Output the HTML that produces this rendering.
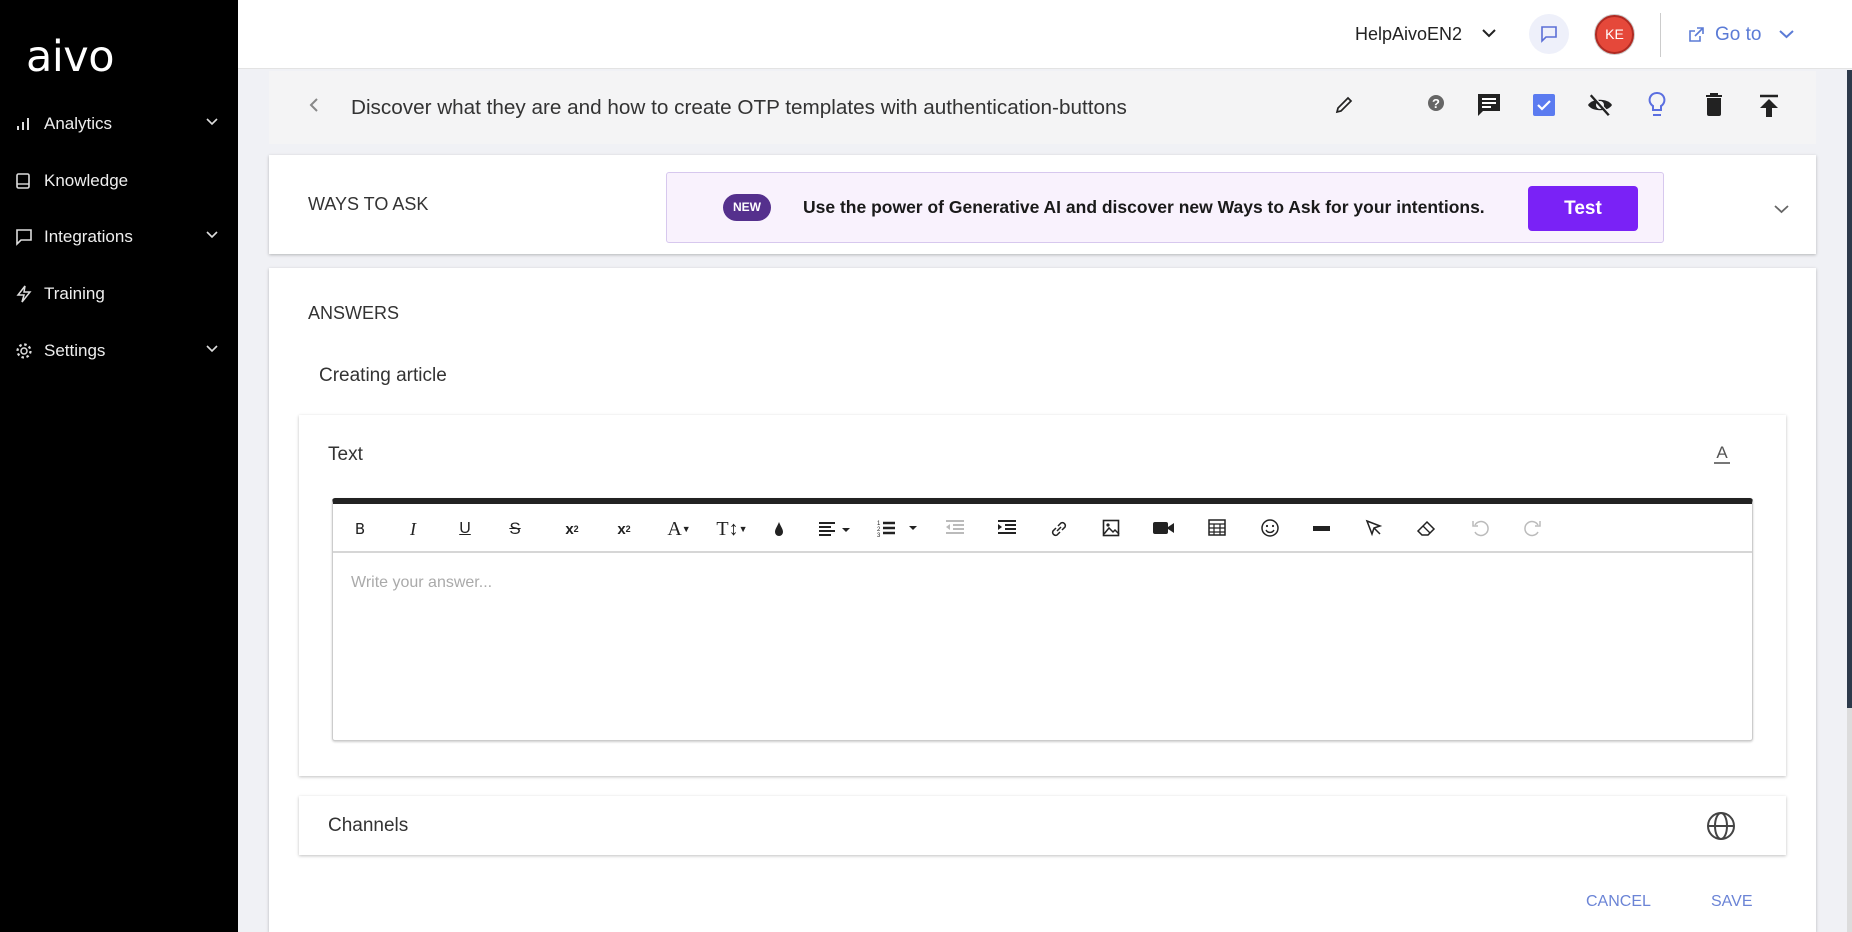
<!DOCTYPE html>
<html><head><meta charset="utf-8">
<style>
*{box-sizing:border-box;margin:0;padding:0}
html{width:1852px;height:932px;overflow:hidden}
body{width:1852px;height:932px;overflow:hidden;background:#f0f1f5;font-family:"Liberation Sans",sans-serif;color:#333;position:relative}
.abs{position:absolute}
#side{left:0;top:0;width:238px;height:932px;background:#000;color:#fff}
.nav{position:absolute;left:0;width:238px;height:30px;font-size:17px;color:#eee}
.nav svg{position:absolute;left:15px;top:5px}
.nav span{position:absolute;left:44px;top:4px}
.nav .chev{position:absolute;left:206px;top:8px}
#top{left:238px;top:0;width:1614px;height:69px;background:#fff;border-bottom:1px solid #e3e3e3}
.card{position:absolute;background:#fff;box-shadow:0 1px 3px rgba(0,0,0,.25)}
.tb{position:absolute;top:518px;width:22px;height:22px;display:flex;align-items:center;justify-content:center;font-size:16px;color:#222}
</style></head><body>
<div id="side" class="abs">
  <div class="abs" style="left:26px;top:32px;font-size:43px;letter-spacing:-0.5px;font-family:'DejaVu Sans',sans-serif;font-weight:500;line-height:50px">aivo</div>
  <div class="nav" style="top:110px"><svg width="16" height="18"><path d="M3 15v-4M8 15V7M13 15V3" stroke="#ddd" stroke-width="2"/></svg><span>Analytics</span><svg class="chev" width="12" height="8"><path d="M1 1l5 5 5-5" stroke="#ddd" stroke-width="1.6" fill="none"/></svg></div>
  <div class="nav" style="top:167px"><svg width="16" height="18"><rect x="2" y="2" width="12" height="14" rx="1.5" stroke="#ddd" stroke-width="1.6" fill="none"/><path d="M2 12h12" stroke="#ddd" stroke-width="1.4"/></svg><span>Knowledge</span></div>
  <div class="nav" style="top:223px"><svg width="18" height="18"><path d="M2 2h14v10H6l-4 4z" stroke="#ddd" stroke-width="1.6" fill="none"/></svg><span>Integrations</span><svg class="chev" width="12" height="8"><path d="M1 1l5 5 5-5" stroke="#ddd" stroke-width="1.6" fill="none"/></svg></div>
  <div class="nav" style="top:280px"><svg width="18" height="18"><path d="M10 1L3 10h6l-2 7 8-10h-6z" stroke="#ddd" stroke-width="1.5" fill="none"/></svg><span>Training</span></div>
  <div class="nav" style="top:337px"><svg width="18" height="18"><circle cx="9" cy="9" r="3" stroke="#ddd" stroke-width="1.5" fill="none"/><circle cx="9" cy="9" r="6.5" stroke="#ddd" stroke-width="2.2" fill="none" stroke-dasharray="2.5 2.6"/></svg><span>Settings</span><svg class="chev" width="12" height="8"><path d="M1 1l5 5 5-5" stroke="#ddd" stroke-width="1.6" fill="none"/></svg></div>
</div>
<div id="top" class="abs">
  <div class="abs" style="left:1117px;top:24px;font-size:18px;color:#222">HelpAivoEN2</div>
  <svg class="abs" style="left:1244px;top:29px" width="14" height="9"><path d="M1 1l6 6 6-6" stroke="#222" stroke-width="2" fill="none"/></svg>
  <div class="abs" style="left:1291px;top:14px;width:40px;height:40px;border-radius:50%;background:#eef0fa"></div>
  <svg class="abs" style="left:1302px;top:25px" width="18" height="18"><path d="M2 2h14v10H6l-4 4z" stroke="#5b6fd6" stroke-width="1.6" fill="none"/></svg>
  <div class="abs" style="left:1357px;top:15px;width:39px;height:39px;border-radius:50%;background:#e5483a;border:2px solid #b02a22;box-shadow:0 0 0 1px #ccc;color:#fff;font-size:14px;text-align:center;line-height:35px">KE</div>
  <div class="abs" style="left:1422px;top:13px;width:1px;height:44px;background:#ccc"></div>
  <svg class="abs" style="left:1449px;top:26px" width="18" height="18"><path d="M13 10v5H3V5h5M10 2h6v6M16 2L8 10" stroke="#5b7bd6" stroke-width="1.6" fill="none"/></svg>
  <div class="abs" style="left:1477px;top:24px;font-size:19px;color:#5b7bd6">Go to</div>
  <svg class="abs" style="left:1541px;top:30px" width="15" height="9"><path d="M1 1l6.5 6 6.5-6" stroke="#5b7bd6" stroke-width="2" fill="none"/></svg>
</div>
<div class="abs" style="left:1847px;top:70px;width:5px;height:638px;background:#2d3a4b"></div>
<div class="abs" style="left:1847px;top:708px;width:5px;height:224px;background:#dcdcdc"></div>

<div class="abs" style="left:269px;top:71px;width:1547px;height:73px;background:#f4f4f5"></div>
<svg class="abs" style="left:309px;top:97px" width="10" height="16"><path d="M8 2L2 8l6 6" stroke="#888" stroke-width="2" fill="none"/></svg>
<div class="abs" style="left:351px;top:96px;font-size:20.7px;color:#333">Discover what they are and how to create OTP templates with authentication-buttons</div>
<svg class="abs" style="left:1333px;top:94px" width="22" height="22"><path d="M4 18l1-4L15 4l3 3L8 17z" stroke="#222" stroke-width="1.7" fill="none"/></svg>
<svg class="abs" style="left:1427px;top:94px" width="18" height="18"><circle cx="9" cy="9" r="8" fill="#666"/><text x="9" y="14" font-size="13" font-weight="bold" text-anchor="middle" fill="#fff" font-family="Liberation Sans">?</text></svg>
<svg class="abs" style="left:1476px;top:92px" width="26" height="26"><path d="M2 2h22v17H7l-5 5z" fill="#222"/><path d="M6 7h14M6 11h14M6 15h9" stroke="#fff" stroke-width="2"/></svg>
<svg class="abs" style="left:1532px;top:93px" width="24" height="24"><rect x="1" y="1" width="22" height="22" rx="2" fill="#5b7bf0"/><path d="M6 12l4 4 8-8" stroke="#fff" stroke-width="2.2" fill="none"/></svg>
<svg class="abs" style="left:1586px;top:92px" width="28" height="26"><path d="M2 13c4-7 20-7 24 0-4 7-20 7-24 0z" fill="#222"/><circle cx="14" cy="13" r="4" fill="#f4f4f5"/><path d="M5 3l18 20" stroke="#222" stroke-width="3"/><path d="M6 2l18 20" stroke="#f4f4f5" stroke-width="1.2"/></svg>
<svg class="abs" style="left:1647px;top:91px" width="20" height="28"><path d="M10 2a7 7 0 0 0-4 13v4h8v-4a7 7 0 0 0-4-13z" stroke="#5b6fe0" stroke-width="2" fill="none"/><path d="M6 24h8" stroke="#5b6fe0" stroke-width="2"/></svg>
<svg class="abs" style="left:1704px;top:92px" width="20" height="26"><path d="M2 4h16M7 4V2h6v2" stroke="#222" stroke-width="2"/><path d="M3 6h14v16a2 2 0 0 1-2 2H5a2 2 0 0 1-2-2z" fill="#222"/></svg>
<svg class="abs" style="left:1759px;top:94px" width="20" height="24"><path d="M1 2h18" stroke="#222" stroke-width="2.5"/><path d="M10 5l-9 9h6v9h6v-9h6z" fill="#222"/></svg>

<div class="card" style="left:269px;top:155px;width:1547px;height:99px"></div>
<div class="abs" style="left:308px;top:194px;font-size:18px;color:#333">WAYS TO ASK</div>
<div class="abs" style="left:666px;top:172px;width:998px;height:71px;background:#f9f2fd;border:1px solid #d7c8ee;border-radius:3px"></div>
<div class="abs" style="left:723px;top:194px;width:48px;height:27px;border-radius:14px;background:#55308d;color:#fff;font-size:12px;font-weight:bold;text-align:center;line-height:27px">NEW</div>
<div class="abs" style="left:803px;top:197px;font-size:17.5px;font-weight:bold;color:#1a1a1a">Use the power of Generative AI and discover new Ways to Ask for your intentions.</div>
<div class="abs" style="left:1528px;top:186px;width:110px;height:45px;background:#7a22f6;border-radius:4px;color:#fff;font-size:19px;font-weight:bold;text-align:center;line-height:45px">Test</div>
<svg class="abs" style="left:1774px;top:205px" width="15" height="9"><path d="M1 1l6.5 6 6.5-6" stroke="#666" stroke-width="1.8" fill="none"/></svg>

<div class="card" style="left:269px;top:268px;width:1547px;height:664px"></div>
<div class="abs" style="left:308px;top:303px;font-size:18px;color:#333">ANSWERS</div>
<div class="abs" style="left:319px;top:365px;font-size:19px;color:#333">Creating article</div>

<div class="card" style="left:299px;top:415px;width:1487px;height:361px"></div>
<div class="abs" style="left:328px;top:444px;font-size:19px;color:#333">Text</div>
<svg class="abs" style="left:1712px;top:443px" width="20" height="22"><text x="10" y="15" font-size="17" text-anchor="middle" fill="#555" font-family="Liberation Sans">A</text><path d="M2 20h16" stroke="#555" stroke-width="1.6"/></svg>

<div class="abs" style="left:332px;top:498px;width:1421px;height:243px;background:#fff;border:1px solid #ccc;border-top:6px solid #222;border-radius:3px;box-shadow:0 1px 2px rgba(0,0,0,.2)"></div>
<div class="abs" style="left:333px;top:551px;width:1419px;height:2px;background:#d6d6d6"></div>
<div class="abs" style="left:351px;top:574px;font-size:16px;color:#aaa">Write your answer...</div>

<div class="tb" style="left:349px;font-family:'DejaVu Sans';font-size:15px">B</div>
<div class="tb" style="left:402px;font-family:'Liberation Serif';font-style:italic;font-size:18px">I</div>
<div class="tb" style="left:454px;text-decoration:underline;font-size:16px">U</div>
<div class="tb" style="left:504px;text-decoration:line-through;font-size:17px">S</div>
<div class="tb" style="left:561px;font-weight:bold;font-size:15px">x<sub style="font-size:9px">2</sub></div>
<div class="tb" style="left:613px;font-weight:bold;font-size:15px">x<sup style="font-size:9px">2</sup></div>
<div class="tb" style="left:664px;width:30px;font-family:'Liberation Serif';font-size:20px">A<span style="font-size:9px">▼</span></div>
<div class="tb" style="left:715px;width:34px;font-family:'Liberation Serif';font-size:20px">T↕<span style="font-size:9px">▼</span></div>
<svg class="abs" style="left:772px;top:520px" width="14" height="18"><path d="M7 2C5 7 3 9 3 12a4 4 0 0 0 8 0c0-3-2-5-4-10z" fill="#222"/></svg>
<svg class="abs" style="left:818px;top:520px" width="36" height="18"><path d="M1 3h16M1 7h12M1 11h16M1 15h12" stroke="#222" stroke-width="2"/><path d="M24 8h8l-4 4z" fill="#222"/></svg>
<svg class="abs" style="left:877px;top:518px" width="46" height="20"><text x="0" y="7" font-size="6" fill="#222">1</text><text x="0" y="13" font-size="6" fill="#222">2</text><text x="0" y="19" font-size="6" fill="#222">3</text><path d="M6 5h12M6 10h12M6 15h12" stroke="#222" stroke-width="2.4"/><path d="M32 8h8l-4 4z" fill="#222"/></svg>
<svg class="abs" style="left:945px;top:519px" width="20" height="18"><path d="M1 2h18M8 6h11M8 10h11M1 14h18" stroke="#bbb" stroke-width="2"/><path d="M5 5L1 8l4 3z" fill="#bbb"/></svg>
<svg class="abs" style="left:997px;top:519px" width="20" height="18"><path d="M1 2h18M8 6h11M8 10h11M1 14h18" stroke="#222" stroke-width="2"/><path d="M1 5l4 3-4 3z" fill="#222"/></svg>
<svg class="abs" style="left:1049px;top:519px" width="20" height="20"><path d="M8 12l4-4M7 9l-3 3a3 3 0 0 0 4 4l3-3M13 11l3-3a3 3 0 0 0-4-4l-3 3" stroke="#222" stroke-width="1.5" fill="none"/></svg>
<svg class="abs" style="left:1102px;top:519px" width="18" height="18"><rect x="1.5" y="1.5" width="15" height="15" stroke="#222" stroke-width="1.6" fill="none"/><circle cx="6" cy="6" r="1.6" fill="#222"/><path d="M2 15l5-6 4 4 2-2 4 4" stroke="#222" stroke-width="1.5" fill="none"/></svg>
<svg class="abs" style="left:1152px;top:519px" width="24" height="18"><rect x="1" y="3" width="15" height="12" rx="2" fill="#222"/><path d="M16 8l6-4v10l-6-4z" fill="#222"/></svg>
<svg class="abs" style="left:1208px;top:519px" width="18" height="18"><rect x="1" y="1" width="16" height="15" stroke="#222" stroke-width="1.5" fill="none"/><path d="M1 5h16M1 9h16M1 13h16M6 5v11M12 5v11" stroke="#222" stroke-width="1.2"/></svg>
<svg class="abs" style="left:1260px;top:518px" width="20" height="20"><circle cx="10" cy="10" r="8" stroke="#222" stroke-width="1.5" fill="none"/><circle cx="7" cy="8" r="1.1" fill="#222"/><circle cx="13" cy="8" r="1.1" fill="#222"/><path d="M6 12a4.5 4.5 0 0 0 8 0" stroke="#222" stroke-width="1.4" fill="none"/></svg>
<div class="abs" style="left:1313px;top:526px;width:17px;height:5px;background:#222"></div>
<svg class="abs" style="left:1365px;top:519px" width="18" height="18"><path d="M2 2l13 5-6 2-2 6z" stroke="#222" stroke-width="1.5" fill="none"/><path d="M9 9l6 6" stroke="#222" stroke-width="1.5"/></svg>
<svg class="abs" style="left:1416px;top:518px" width="22" height="20"><path d="M2 13l9-9 7 7-6 6H6z" stroke="#222" stroke-width="1.5" fill="none"/><path d="M7 8l7 7" stroke="#222" stroke-width="1.3"/></svg>
<svg class="abs" style="left:1470px;top:518px" width="20" height="20"><path d="M5 7a7 7 0 1 1 0 7" stroke="#bbb" stroke-width="1.5" fill="none"/><path d="M3 3v5h5" stroke="#bbb" stroke-width="1.5" fill="none"/></svg>
<svg class="abs" style="left:1523px;top:518px" width="20" height="20"><path d="M15 7a7 7 0 1 0 0 7" stroke="#bbb" stroke-width="1.5" fill="none"/><path d="M17 3v5h-5" stroke="#bbb" stroke-width="1.5" fill="none"/></svg>

<div class="card" style="left:299px;top:796px;width:1487px;height:59px"></div>
<div class="abs" style="left:328px;top:815px;font-size:19px;color:#333">Channels</div>
<svg class="abs" style="left:1706px;top:811px" width="30" height="30"><circle cx="15" cy="15" r="13" stroke="#444" stroke-width="2" fill="none"/><ellipse cx="15" cy="15" rx="6" ry="13" stroke="#444" stroke-width="2" fill="none"/><path d="M2 15h26" stroke="#444" stroke-width="2"/></svg>

<div class="abs" style="left:1586px;top:893px;font-size:16px;color:#6b84d6">CANCEL</div>
<div class="abs" style="left:1711px;top:893px;font-size:16px;color:#6b84d6">SAVE</div>
</body></html>
